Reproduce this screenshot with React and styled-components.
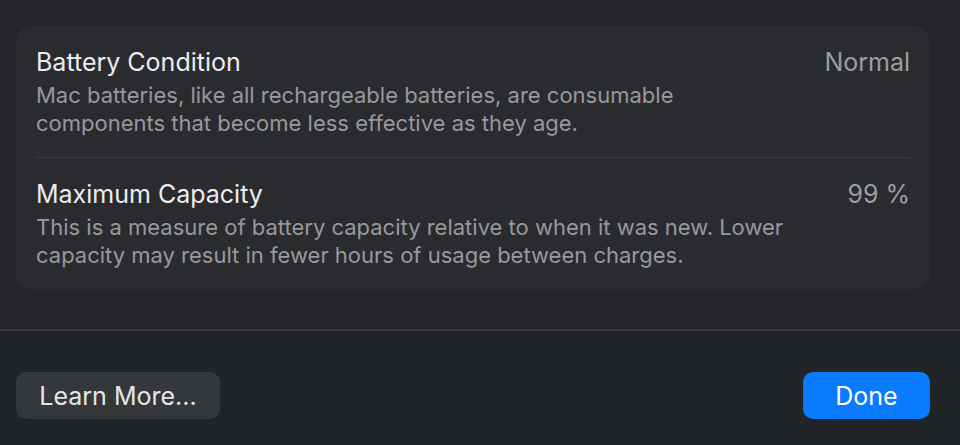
import React from 'react';
import styled, { createGlobalStyle } from 'styled-components';

const GlobalStyle = createGlobalStyle`
  html, body {
    margin: 0;
    padding: 0;
    background: #242528;
  }
  body {
    font-family: Inter, 'Liberation Sans', sans-serif;
    -webkit-font-smoothing: antialiased;
  }
`;

const Sheet = styled.div`
  width: 960px;
  height: 445px;
  display: flex;
  flex-direction: column;
  background: #242528;
  overflow: hidden;
`;

const Body = styled.div`
  padding: 26px 30px 0 16px;
  height: 331px;
  box-sizing: border-box;
  border-bottom: 2px solid #38393c;
`;

const Card = styled.div`
  background: #2a2b2f;
  border-radius: 16px;
  padding: 0 20px;
`;

const Row = styled.div`
  display: flex;
  justify-content: space-between;
  align-items: flex-start;
  padding: 20px 0;
  border-top: ${(p) => (p.first ? 'none' : '1px solid #3a3b3f')};
`;

const Texts = styled.div`
  display: flex;
  flex-direction: column;
`;

const Title = styled.span`
  color: #ececee;
  font-size: 25px;
  line-height: 32px;
  font-weight: 400;
  margin-bottom: 3px;
`;

const Desc = styled.span`
  color: #98989d;
  font-size: 22px;
  line-height: 28px;
`;

const Value = styled.span`
  color: #9d9da2;
  font-size: 25px;
  line-height: 32px;
`;

const Footer = styled.div`
  flex: 1;
  display: flex;
  justify-content: space-between;
  align-items: flex-start;
  padding: 41px 30px 0 16px;
  background: #222528;
`;

const Button = styled.button`
  height: 47px;
  border: none;
  border-radius: 10px;
  padding: 0 20px;
  font-family: inherit;
  font-size: 25px;
  color: ${(p) => (p.primary ? '#ffffff' : '#e6e6e8')};
  background: ${(p) => (p.primary ? '#0a7aff' : '#35383b')};
  min-width: ${(p) => (p.primary ? '127px' : '204px')};
`;

const rows = [
  {
    title: 'Battery Condition',
    value: 'Normal',
    desc: ['Mac batteries, like all rechargeable batteries, are consumable', 'components that become less effective as they age.']
  },
  {
    title: 'Maximum Capacity',
    value: '99 %',
    desc: ['This is a measure of battery capacity relative to when it was new. Lower', 'capacity may result in fewer hours of usage between charges.']
  }
];

const App = () => (
  <>
    <GlobalStyle />
    <Sheet>
      <Body>
        <Card>
          {rows.map((r, i) => (
            <Row key={r.title} first={i === 0}>
              <Texts>
                <Title>{r.title}</Title>
                {r.desc.map((d) => (
                  <Desc key={d}>{d}</Desc>
                ))}
              </Texts>
              <Value>{r.value}</Value>
            </Row>
          ))}
        </Card>
      </Body>
      <Footer>
        <Button>Learn More...</Button>
        <Button primary>Done</Button>
      </Footer>
    </Sheet>
  </>
);

export default App;
